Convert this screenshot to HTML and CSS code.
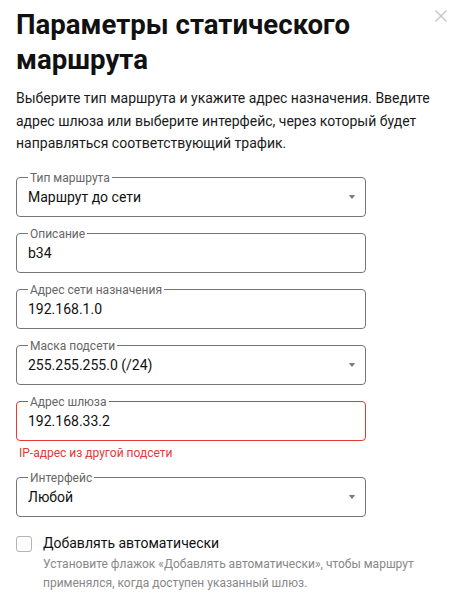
FILE: index.html
```html
<!DOCTYPE html>
<html lang="ru">
<head>
  <meta charset="UTF-8">
  <title>Параметры статического маршрута</title>
  <link rel="stylesheet" href="styles.css">
</head>
<body>
  <div class="route-dialog">
    <button class="close-btn" aria-label="Закрыть">
      <svg width="12" height="12" viewBox="0 0 12 12"><path d="M0.5 0.5L11.5 11.5M11.5 0.5L0.5 11.5" stroke="#c8c8c8" stroke-width="1.5" fill="none"/></svg>
    </button>
    <h1 class="dialog-title">Параметры статического маршрута</h1>
    <p class="dialog-text">Выберите тип маршрута и укажите адрес назначения. Введите адрес шлюза или выберите интерфейс, через который будет направляться соответствующий трафик.</p>

    <form class="route-form">
      <fieldset class="field field-select">
        <legend>Тип маршрута</legend>
        <div class="field-value">Маршрут до сети</div>
        <span class="arrow"></span>
      </fieldset>

      <fieldset class="field">
        <legend>Описание</legend>
        <div class="field-value">b34</div>
      </fieldset>

      <fieldset class="field">
        <legend>Адрес сети назначения</legend>
        <div class="field-value">192.168.1.0</div>
      </fieldset>

      <fieldset class="field field-select">
        <legend>Маска подсети</legend>
        <div class="field-value">255.255.255.0 (/24)</div>
        <span class="arrow"></span>
      </fieldset>

      <div class="field-group">
        <fieldset class="field field-error">
          <legend>Адрес шлюза</legend>
          <div class="field-value">192.168.33.2</div>
        </fieldset>
        <div class="error-text">IP-адрес из другой подсети</div>
      </div>

      <fieldset class="field field-select">
        <legend>Интерфейс</legend>
        <div class="field-value">Любой</div>
        <span class="arrow"></span>
      </fieldset>

      <div class="check-row">
        <span class="checkbox"></span>
        <div>
          <div class="check-label">Добавлять автоматически</div>
          <div class="check-help">Установите флажок «Добавлять автоматически», чтобы маршрут применялся, когда доступен указанный шлюз.</div>
        </div>
      </div>
    </form>
  </div>
</body>
</html>
```

FILE: styles.css
```css
body {
  margin: 0;
  background: #fff;
  font-family: Roboto, "Liberation Sans", sans-serif;
  color: #111;
}
.route-dialog {
  position: relative;
  padding: 7px 0 0 16px;
  width: 350px;
}
.close-btn {
  position: absolute;
  top: 10px;
  left: 435px;
  background: none;
  border: none;
  padding: 0;
  line-height: 0;
  cursor: pointer;
}
.dialog-title {
  margin: 0;
  font-size: 27.6px;
  font-weight: 700;
  line-height: 35px;
  width: 400px;
}
.dialog-text {
  margin: 10px 0 0;
  width: 430px;
  font-size: 14px;
  line-height: 22.5px;
  color: #1a1a1a;
}
.route-form {
  margin-top: 16px;
  display: flex;
  flex-direction: column;
  gap: 10px;
}
.field {
  position: relative;
  margin: 0;
  padding: 2px 11px 9px;
  border: 1px solid #757575;
  border-radius: 4px;
  min-width: 0;
}
.field legend {
  padding: 0 2px;
  font-size: 12px;
  line-height: 14px;
  color: #666;
}
.field-value {
  font-size: 14px;
  line-height: 20px;
  color: #111;
}
.arrow {
  position: absolute;
  right: 10px;
  top: 10px;
  width: 0;
  height: 0;
  border-left: 3.5px solid transparent;
  border-right: 3.5px solid transparent;
  border-top: 4px solid #777;
}
.field-error {
  border-color: #e53935;
}
.error-text {
  margin: 4px 0 0 3px;
  font-size: 12px;
  line-height: 16px;
  color: #e53935;
}
.field-group {
  display: flex;
  flex-direction: column;
}
.check-row {
  display: flex;
  gap: 11px;
  margin-top: 7px;
}
.checkbox {
  flex: none;
  width: 14px;
  height: 14px;
  margin-top: 2px;
  border: 1px solid #b5b5b5;
  border-radius: 3px;
}
.check-label {
  font-size: 14px;
  line-height: 18px;
}
.check-help {
  width: 400px;
  margin-top: 3px;
  font-size: 12px;
  line-height: 19px;
  color: #888;
}
```
